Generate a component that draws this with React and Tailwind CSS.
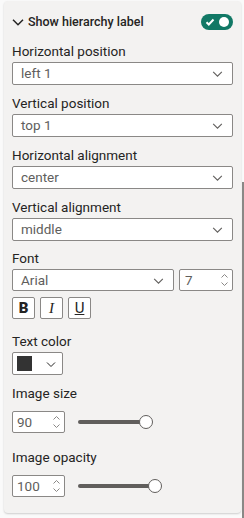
import React, { useState } from 'react';

const Chevron = ({ className = '', width = 1, d = 'M2 4.5l4 4 4-4' }) => (
  <svg viewBox="0 0 12 12" className={className} fill="none" stroke="currentColor" strokeWidth={width}>
    <path d={d} />
  </svg>
);

const Spin = () => (
  <svg viewBox="0 0 8 18" className="w-[9px] h-[18px] text-[#8a8886]" fill="none" stroke="currentColor" strokeWidth="1">
    <path d="M1 6.5l3-3 3 3" />
    <path d="M1 11.5l3 3 3-3" />
  </svg>
);

const Dropdown = ({ value }) => (
  <div className="h-[23px] mt-[3px] bg-white border border-[#8a8886] rounded-[2px] flex items-center justify-between pl-[8px] pr-[8px] text-[#605e5c]">
    <span>{value}</span>
    <Chevron className="w-[13px] h-[13px] text-[#605e5c]" />
  </div>
);

const Label = ({ children, className = '' }) => (
  <div className={`text-[#252423] leading-[16px] ${className}`}>{children}</div>
);

const NumberBox = ({ value }) => (
  <div className="w-[53px] h-[22px] bg-white border border-[#8a8886] rounded-[2px] flex items-center justify-between pl-[4px] pr-[3px] text-[#605e5c]">
    <span>{value}</span>
    <Spin />
  </div>
);

const Slider = ({ width }) => (
  <div className="relative ml-[13px] h-[14px] w-[90px] flex items-center">
    <div className="h-[4px] rounded-full bg-[#605e5c]" style={{ width }} />
    <div
      className="absolute top-0 w-[14px] h-[14px] rounded-full bg-white border-[1.5px] border-[#605e5c]"
      style={{ left: width - 7 }}
    />
  </div>
);

export default function App() {
  const [on] = useState(true);
  return (
    <div
      className="relative w-[244px] h-[518px] bg-[#fafafa] overflow-hidden text-[13.5px]"
      style={{ fontFamily: 'Roboto, "Noto Sans", sans-serif' }}
    >
      <div className="absolute right-0 top-[182px] bottom-0 w-[2px] bg-[#8a8886]" />
      <div className="ml-[4px] mt-[1px] w-[237px] h-[512px] bg-[#f3f2f1] rounded-[4px] shadow-[0_1px_2px_rgba(0,0,0,0.18)] pl-[8px] pr-[8px]">
        <div className="h-[42px] flex items-center justify-between">
          <div className="flex items-center gap-[4px]">
            <Chevron
              className="w-[12px] h-[12px] text-[#252423]"
              width={1.5}
              d="M1 3.8l5 5 5-5"
            />
            <span className="font-medium text-[#252423] text-[12.5px]">Show hierarchy label</span>
          </div>
          <div className="w-[32px] h-[16px] rounded-full bg-[#117865] flex items-center justify-between px-[4px]">
            {on && (
              <svg viewBox="0 0 10 10" className="w-[10px] h-[10px]" fill="none" stroke="white" strokeWidth="2">
                <path d="M1.5 5.2l2.3 2.3 4.7-5" />
              </svg>
            )}
            <div className="w-[10px] h-[10px] rounded-full bg-white" />
          </div>
        </div>

        <Label>Horizontal position</Label>
        <Dropdown value="left 1" />
        <Label className="mt-[10px]">Vertical position</Label>
        <Dropdown value="top 1" />
        <Label className="mt-[10px]">Horizontal alignment</Label>
        <Dropdown value="center" />
        <Label className="mt-[10px]">Vertical alignment</Label>
        <Dropdown value="middle" />

        <Label className="mt-[9px]">Font</Label>
        <div className="flex gap-[5px] mt-[3px]">
          <div className="w-[162px] h-[22px] bg-white border border-[#8a8886] rounded-[2px] flex items-center justify-between pl-[8px] pr-[8px] text-[#605e5c]">
            <span>Arial</span>
            <Chevron className="w-[13px] h-[13px]" />
          </div>
          <div className="flex-1 h-[22px] bg-white border border-[#8a8886] rounded-[2px] flex items-center justify-between pl-[5px] pr-[3px] text-[#605e5c]">
            <span>7</span>
            <Spin />
          </div>
        </div>
        <div className="flex gap-[5px] mt-[6px]">
          <div className="w-[23px] h-[22px] bg-white border border-[#8a8886] rounded-[2px] flex items-center justify-center font-black text-[15px] text-[#252423]">B</div>
          <div className="w-[23px] h-[22px] bg-white border border-[#8a8886] rounded-[2px] flex items-center justify-center italic text-[15px] text-[#252423]" style={{ fontFamily: '"Liberation Serif", serif' }}>I</div>
          <div className="w-[23px] h-[22px] bg-white border border-[#8a8886] rounded-[2px] flex items-center justify-center underline text-[15px] text-[#252423]">U</div>
        </div>

        <Label className="mt-[14px]">Text color</Label>
        <div className="mt-[3px] w-[51px] h-[23px] bg-white border border-[#8a8886] rounded-[2px] flex items-center justify-between pl-[4px] pr-[5px]">
          <div className="w-[15px] h-[15px] bg-[#333333]" />
          <Chevron className="w-[12px] h-[12px] text-[#252423]" />
        </div>

        <Label className="mt-[10px]">Image size</Label>
        <div className="flex items-center mt-[10px]">
          <NumberBox value="90" />
          <Slider width={68} />
        </div>

        <Label className="mt-[16px]">Image opacity</Label>
        <div className="flex items-center mt-[10px]">
          <NumberBox value="100" />
          <Slider width={77} />
        </div>
      </div>
    </div>
  );
}
